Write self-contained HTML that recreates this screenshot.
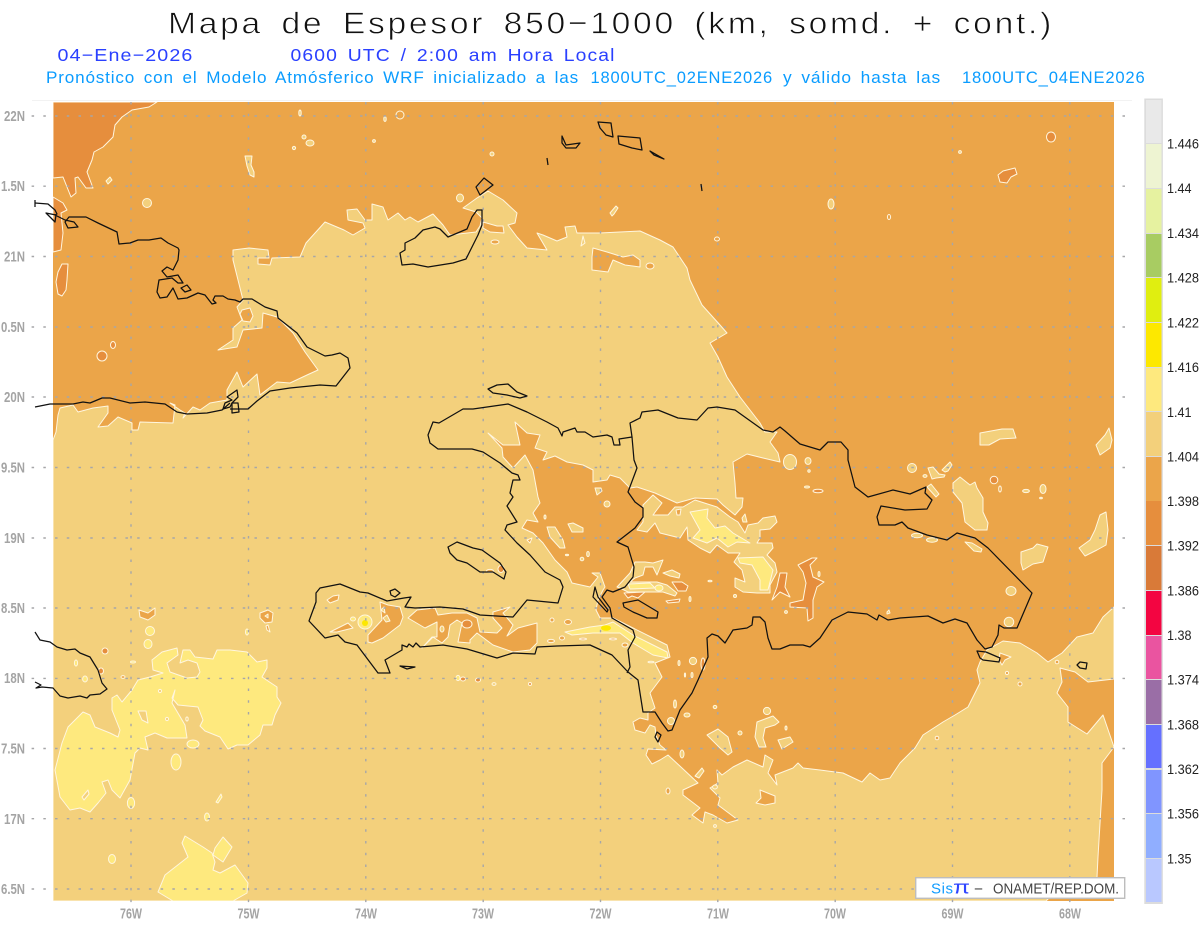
<!DOCTYPE html>
<html lang="es"><head><meta charset="utf-8"><title>Mapa de Espesor 850-1000</title>
<style>
html,body{margin:0;padding:0;background:#fff;width:1200px;height:927px;overflow:hidden}
svg{display:block;position:absolute;left:0;top:0}
text{font-family:"Liberation Sans",sans-serif;white-space:pre}
.c polygon,.c path,.c ellipse,.c circle{stroke:#fff6df;stroke-width:1;stroke-linejoin:round}
.l{fill:#f3d07b}.o{fill:#eba54a}.d{fill:#e68e3d}.y{fill:#fee97e}.b{fill:#fde800}
.g line{stroke:#a6a6a8;stroke-width:1.4;stroke-dasharray:2.5 9.23}
.k polygon,.k polyline{fill:none;stroke:#111;stroke-width:1.25;stroke-linejoin:round}
.ax{fill:#a4a4a4;font-weight:bold;font-size:14.5px}
.lg{fill:#222;font-size:13.5px}
.s2{font-size:17.5px;fill:#2a40ff;letter-spacing:1px;word-spacing:3px}
.s3{font-size:16.5px;fill:#0a9cff;letter-spacing:.8px;word-spacing:3px}
</style></head><body>
<svg width="1200" height="927" viewBox="0 0 1200 927" xmlns="http://www.w3.org/2000/svg">
<defs><filter id="sf" x="0" y="0" width="100%" height="100%"><feGaussianBlur stdDeviation=".35"/></filter></defs>
<rect width="1200" height="927" fill="#fff"/>
<text x="168" y="33.5" font-size="31" textLength="886" lengthAdjust="spacingAndGlyphs" fill="#111" stroke="#fff" stroke-width=".7" style="letter-spacing:2.5px;word-spacing:6px">Mapa de Espesor 850−1000 (km, somd. + cont.)</text>
<text class="s2" x="57.5" y="61" textLength="136" lengthAdjust="spacingAndGlyphs">04−Ene−2026</text>
<text class="s2" x="290.5" y="61" textLength="325" lengthAdjust="spacingAndGlyphs">0600 UTC / 2:00 am Hora Local</text>
<text class="s3" x="46" y="83" textLength="533" lengthAdjust="spacingAndGlyphs">Pronóstico con el Modelo Atmósferico WRF inicializado a las</text>
<text class="s3" x="590.5" y="83" textLength="182.5" lengthAdjust="spacingAndGlyphs">1800UTC_02ENE2026</text>
<text class="s3" x="783" y="83" textLength="158" lengthAdjust="spacingAndGlyphs">y válido hasta las</text>
<text class="s3" x="962" y="83" textLength="183.5" lengthAdjust="spacingAndGlyphs">1800UTC_04ENE2026</text>

<line x1="32" y1="100.5" x2="1132" y2="100.5" stroke="#f2f2f2"/>
<g class="c" filter="url(#sf)">
<rect x="53" y="102" width="1061" height="799" class="o"/>
<polygon class="d" points="53,102 157,102 149,107 132,110 122,117 115,125 113,137 103,147 94,152 92,160 87,172 93,188 86,188 78,177 75,178 76,193 71,197 63,177 53,178"/>
<polygon class="d" points="53,197 63,203 67,210 61,213 63,233 61,250 53,252"/>
<polygon class="d" points="62,264 68,264 67,280 66,290 62,296 58,294 56,282 58,272"/>
<ellipse class="d" cx="102" cy="356" rx="5" ry="5"/>
<ellipse class="d" cx="113" cy="345" rx="2.5" ry="3.5"/>
<polygon class="d" points="998,175 1003,171 1015,168 1017,174 1011,177 1007,183 1000,182"/>
<ellipse class="d" cx="1051" cy="137" rx="4.5" ry="5"/>
<polygon class="l" points="245,156 252,156 251,165 254,172 254,177 250,175 247,166"/>
<circle class="l" cx="147" cy="203" r="4.5"/><polygon class="l" points="106,181 110,177 112,180 108,184"/>
<ellipse class="l" cx="310" cy="143" rx="4" ry="3"/><circle class="l" cx="304" cy="137" r="2"/><circle class="l" cx="294" cy="148" r="1.6"/>
<circle class="l" cx="374" cy="141" r="1.4"/><ellipse class="l" cx="300" cy="113" rx="1.2" ry="3"/><ellipse class="o" cx="400" cy="115" rx="4" ry="4"/><ellipse class="l" cx="385" cy="119" rx="1.2" ry="2.4"/>
<circle class="l" cx="492" cy="154" r="2"/><polygon class="l" points="610,213 616,206 618,208 614,214 612,216"/>
<ellipse class="l" cx="831" cy="204" rx="3" ry="5"/><circle class="l" cx="960" cy="152" r="1.4"/><ellipse class="o" cx="889" cy="217" rx="1.6" ry="2.5"/><ellipse class="o" cx="717" cy="239" rx="2.5" ry="2"/>
<ellipse class="l" cx="460" cy="198" rx="3.5" ry="4"/>

<polygon class="l" points="53,440 56,432 58,415 60,408 73,405 78,412 93,408 108,406 108,413 98,427 108,426 118,417 132,423 132,430 138,430 140,422 173,423 175,405 170,403 180,410 185,413 183,418 193,407 200,410 210,403 227,400 227,390 237,372 243,387 257,374 260,395 277,382 290,383 307,375 318,370 305,352 293,333 277,317 263,313 262,328 243,330 237,347 218,350 233,340 233,328 242,320 237,307 243,300 238,280 233,260 233,250 249,248 268,250 269,258 258,258 258,264 270,265 272,258 300,257 306,243 325,222 344,230 353,235 365,228 363,223 348,220 347,210 357,209 365,220 372,220 372,204 383,207 388,220 398,213 405,220 410,217 418,222 433,214 443,225 450,235 476,232 480,226 482,218 476,212 463,208 477,198 488,191 503,200 517,213 515,223 508,225 517,237 527,248 547,250 537,233 543,235 557,241 567,237 565,227 575,226 577,233 600,233 620,232 640,231 660,240 673,247 687,268 690,280 702,305 720,325 727,333 710,343 718,357 727,377 740,397 760,423 765,432 777,432 770,442 778,453 780,462 763,458 747,454 733,462 735,483 736,498 743,498 742,507 735,515 723,505 717,499 695,498 677,503 655,493 637,487 630,488 620,478 610,475 607,480 593,482 593,470 583,465 567,462 555,456 543,460 547,452 535,448 540,435 527,433 515,422 520,445 503,445 488,433 502,448 503,457 513,468 525,455 533,470 538,497 540,503 533,513 538,522 527,520 522,528 533,533 543,543 555,560 567,572 572,583 590,587 598,577 592,573 600,573 605,587 603,590 598,600 596,610 600,618 613,618 633,628 667,645 670,657 655,663 662,677 650,693 655,708 648,713 648,720 640,718 633,722 635,730 645,733 650,725 655,727 656,735 660,745 666,750 648,749 646,755 652,764 660,760 668,755 682,768 698,783 683,790 683,795 700,808 692,815 703,823 705,812 713,815 727,823 738,820 718,805 720,798 710,788 718,783 717,770 722,775 733,767 747,760 763,767 765,755 773,760 768,773 777,785 775,775 793,768 798,763 803,768 820,770 843,773 862,782 870,773 880,780 890,778 900,763 915,748 923,735 943,722 955,715 968,707 980,683 977,670 980,662 987,650 1003,641 1020,643 1037,653 1048,662 1062,653 1077,637 1093,633 1103,617 1114,607 1114,679 1088,682 1075,672 1060,668 1062,682 1057,693 1068,707 1068,722 1087,734 1103,715 1114,747 1102,763 1102,790 1098,857 1097,877 1090,890 1050,897 1046,901 53,901"/>

<polygon class="o" points="593,248 607,252 623,257 633,255 640,260 640,267 625,265 613,260 608,272 592,270 592,257"/>
<polygon class="o" points="483,222 497,226 503,226 504,233 490,232 483,228"/>
<ellipse class="o" cx="495" cy="242" rx="4" ry="2"/><ellipse class="o" cx="650" cy="266" rx="4" ry="3"/>
<polygon class="l" points="583,236 585,243 581,246"/>
<polygon class="o" points="242,310 250,308 253,316 250,322 243,321 240,314"/>
<polygon class="o" points="327,600 333,596 339,595 338,600 330,603"/>
<polygon class="o" points="368,642 368,635 382,620 380,602 388,605 400,607 403,617 400,625 383,638 372,643"/>
<polygon class="l" points="381,610 384,607 385,613"/><polygon class="l" points="383,618 387,615 390,621 386,622"/>
<polygon class="o" points="408,618 417,610 435,608 438,615 452,613 467,613 477,618 480,632 497,633 502,628 493,618 493,612 510,607 503,613 513,625 507,636 518,628 537,623 537,643 530,650 513,652 493,645 477,633 470,640 470,643 458,642 462,623 457,620 450,625 448,637 442,643 433,637 422,648 432,637 437,637 437,622 425,628"/>
<ellipse class="d" cx="467" cy="624" rx="5" ry="4"/><ellipse class="l" cx="442" cy="629" rx="2" ry="3"/>
<polygon class="o" points="330,632 348,623 353,628 337,632"/>
<ellipse class="o" cx="552" cy="620" rx="2" ry="2"/><ellipse class="o" cx="568" cy="622" rx="3.5" ry="2.5"/><ellipse class="o" cx="562" cy="638" rx="2.5" ry="2"/><ellipse class="o" cx="551" cy="641" rx="3.5" ry="1.6"/><ellipse class="o" cx="625" cy="645" rx="3" ry="2"/>
<ellipse class="o" cx="490" cy="571" rx="3.5" ry="1.6"/><ellipse class="d" cx="501" cy="569" rx="3" ry="3.5"/>
<ellipse class="d" cx="463" cy="679" rx="2.5" ry="2"/><ellipse class="d" cx="478" cy="680" rx="2.5" ry="2"/><ellipse class="d" cx="530" cy="684" rx="1.5" ry="1.5"/><ellipse class="y" cx="458" cy="678" rx="2" ry="2.6"/><ellipse class="l" cx="494" cy="684" rx="2" ry="1.4"/>
<polygon class="o" points="760,790 775,796 775,803 765,805 756,803 761,798"/>
<polygon class="o" points="1000,653 1011,657 1005,660 1002,665 999,660"/>
<circle class="o" cx="1007" cy="673" r="1.6"/><circle class="o" cx="1020" cy="684" r="2"/><circle class="o" cx="937" cy="738" r="1.8"/><circle class="o" cx="1057" cy="662" r="1.8"/>
<polygon class="o" points="139,610 148,613 155,608 155,615 148,620 140,617"/>
<polygon class="o" points="260,613 268,610 273,613 272,622 265,623 260,618"/>
<polygon class="l" points="265,616 268,614 268,618"/>
<polygon class="o" points="266,626 268,625 270,632 267,630"/>
<circle class="d" cx="105" cy="651" r="3"/><ellipse class="d" cx="101" cy="671" rx="2.5" ry="3"/><ellipse class="o" cx="123" cy="677" rx="2" ry="1.4"/>

<polygon class="l" points="980,433 1002,429 1013,429 1016,438 1000,439 989,445 980,445"/>
<ellipse class="l" cx="790" cy="462" rx="6.5" ry="7.5"/><ellipse class="l" cx="808" cy="461" rx="3" ry="3.4"/><circle class="l" cx="809" cy="471" r="1.2"/><ellipse class="l" cx="807" cy="487" rx="2.5" ry="1"/><ellipse class="d" cx="818" cy="491" rx="5" ry="1.8"/>
<ellipse class="l" cx="912" cy="468" rx="4.5" ry="4.5"/>
<polygon class="l" points="928,468 933,467 939,474 945,475 944,477 936,478 932,479"/>
<polygon class="l" points="942,470 950,462 952,465 948,471 945,472"/>
<ellipse class="l" cx="925" cy="476" rx="2" ry="1.4"/>
<polygon class="l" points="927,487 931,484 939,494 936,497"/>
<polygon class="l" points="960,477 970,485 975,482 977,488 983,498 983,512 988,523 987,530 975,530 965,522 962,503 953,492 953,483"/>
<circle class="d" cx="994" cy="480" r="3.8"/><ellipse class="o" cx="1000" cy="489" rx="1.3" ry="3"/><ellipse class="l" cx="1026" cy="491" rx="3.4" ry="1.6"/><ellipse class="l" cx="1043" cy="489" rx="3" ry="4.5"/><ellipse class="l" cx="1041" cy="498" rx="1.4" ry=".8"/>
<polygon class="l" points="965,542 972,543 982,549 981,552 974,551"/>
<ellipse class="l" cx="917" cy="535.5" rx="5.5" ry="2.2"/><ellipse class="l" cx="932" cy="540" rx="5.5" ry="2.2"/>
<polygon class="l" points="1021,552 1033,548 1037,544 1048,547 1043,562 1033,564 1023,570 1021,563"/>
<ellipse class="l" cx="1011" cy="591" rx="5" ry="4.5"/><circle class="l" cx="1009" cy="622" r="4.8"/>
<polygon class="l" points="1079,548 1090,540 1095,530 1100,515 1106,512 1108,530 1106,545 1097,550 1085,556"/>
<polygon class="l" points="1096,445 1105,435 1109,428 1112,440 1110,448 1100,455"/>
<polygon class="l" points="887,612 889,610 890,613 887,614"/>
<polygon class="l" points="595,488 601,488 602,491 597,495"/><circle class="l" cx="607" cy="504" r="3"/><ellipse class="l" cx="545" cy="517" rx="1" ry="2"/>
<polygon class="l" points="547,527 555,527 563,540 565,548 560,548 550,537"/>
<polygon class="l" points="568,524 573,523 583,528 583,532 572,532"/>
<circle class="l" cx="582" cy="559" r="1.8"/><ellipse class="l" cx="588" cy="554" rx="1.3" ry="2.5"/><ellipse class="y" cx="567" cy="555" rx="1.6" ry=".7"/>
<polygon class="o" points="527,540 532,538 530,543"/>
<polygon class="l" points="637,530 643,522 643,505 653,495 662,503 653,515 668,515 675,507 683,507 695,500 717,507 730,517 738,522 745,533 748,525 758,523 763,518 775,516 777,522 770,529 760,530 760,538 757,543 772,543 773,548 767,555 775,563 777,572 770,585 770,593 757,593 743,592 735,587 735,578 745,582 742,570 734,562 740,553 728,553 717,545 710,553 700,548 688,540 687,527 680,538 668,535 660,533 655,523 647,532"/>
<polygon class="y" points="690,512 708,509 707,518 715,528 725,526 733,533 750,543 737,542 728,547 717,538 707,543 693,538 700,530"/>
<polygon class="y" points="738,558 763,557 773,570 768,590 760,590 760,580 752,565 740,563"/>
<polygon class="o" points="676,510 681,509 680,515 677,515"/>
<polygon class="l" points="742,518 745,514 747,522 743,522"/>
<polygon class="l" points="617,587 630,573 635,562 645,562 653,563 663,560 657,575 653,567 645,567 643,575 635,578 630,582 657,582 667,585 677,593 675,596 663,592 628,592 620,588"/>
<polygon class="y" points="628,584 650,583 655,588 630,589"/><ellipse class="y" cx="659" cy="588" rx="4" ry="3"/>
<polygon class="l" points="663,573 672,570 680,574 679,578 670,576"/>
<polygon class="d" points="672,582 682,582 688,586 686,591 678,591"/>
<polygon class="d" points="624,593 645,592 638,598 632,596 628,598"/>
<polygon class="d" points="666,601 680,599 679,602 668,603"/>
<ellipse class="l" cx="690" cy="599" rx="1" ry="2.5"/><ellipse class="l" cx="735" cy="596" rx="1.5" ry="1.5"/><ellipse class="l" cx="710" cy="581" rx="2" ry=".8"/><ellipse class="l" cx="786" cy="612" rx="1.4" ry="1.4"/><ellipse class="l" cx="819" cy="574" rx="1" ry="2.5"/>
<polygon class="d" points="798,565 812,558 817,558 810,565 813,577 824,582 817,587 813,600 813,618 808,621 807,608 790,607 790,603 803,600 806,583 803,572"/>
<polygon class="d" points="772,600 777,587 780,573 787,573 785,587 790,597 780,592"/>
<circle class="l" cx="693" cy="661" r="3.6"/><ellipse class="l" cx="679" cy="663" rx="1" ry="2.5"/><ellipse class="d" cx="703" cy="664" rx="2" ry="6"/><ellipse class="l" cx="692" cy="675" rx="1" ry="2.5"/><ellipse class="l" cx="685" cy="675" rx=".6" ry="2"/><ellipse class="l" cx="675" cy="704" rx="1.4" ry="4"/>
<polygon class="l" points="707,735 718,729 728,737 732,752 728,755 720,748 712,740"/>
<polygon class="l" points="757,722 773,716 779,722 775,725 765,728 763,738 766,747 759,747 755,737"/>
<circle class="l" cx="767" cy="711" r="3.6"/>
<polygon class="l" points="778,740 790,737 793,742 782,749"/>
<circle class="l" cx="740" cy="733" r="2"/><ellipse class="l" cx="687" cy="715" rx="3" ry="2"/><ellipse class="l" cx="715" cy="707" rx="1.8" ry="1.6"/><ellipse class="l" cx="786" cy="728" rx="1" ry="2"/><circle class="l" cx="671" cy="721" r="3.5"/><ellipse class="l" cx="682" cy="754" rx="2" ry="4"/>
<polygon class="l" points="695,776 702,768 704,771 699,778"/><ellipse class="l" cx="715" cy="787" rx="2.4" ry="2"/>
<ellipse class="o" cx="668" cy="791" rx="2" ry="3"/><ellipse class="l" cx="715" cy="826" rx="1.4" ry="1.4"/>

<polygon class="y" points="55,770 62,743 68,727 83,712 90,715 95,727 110,733 118,737 120,730 112,710 112,698 117,695 122,702 132,690 138,680 150,677 163,673 153,670 152,660 162,652 177,648 178,655 167,663 170,672 187,678 197,677 200,672 197,663 188,660 180,663 183,650 190,650 195,657 213,659 217,650 230,650 247,652 257,662 267,660 267,668 262,677 277,687 277,697 281,703 275,715 272,725 263,725 260,735 248,745 237,745 228,749 220,737 205,731 200,726 203,720 198,707 178,705 172,698 175,690 172,703 185,725 187,738 167,738 155,733 145,737 148,750 140,748 135,753 130,780 120,798 112,790 108,780 102,782 106,793 98,803 90,812 80,808 70,810 60,797"/>
<polygon class="l" points="138,711 146,711 148,723 142,720"/><polygon class="l" points="82,797 88,790 89,794 84,800"/>
<circle class="l" cx="160" cy="691" r="1.6"/><circle class="l" cx="167" cy="719" r="1.6"/><ellipse class="l" cx="187" cy="719" rx="1.2" ry="2"/>
<ellipse class="y" cx="150" cy="631" rx="4.5" ry="4.5"/><ellipse class="y" cx="148" cy="644" rx="4" ry="4.5"/><ellipse class="y" cx="133" cy="662" rx="2.5" ry="1"/><ellipse class="y" cx="193" cy="744" rx="6" ry="4"/><ellipse class="y" cx="176" cy="762" rx="5" ry="8"/><ellipse class="y" cx="131" cy="803" rx="3.6" ry="5.5"/><polygon class="y" points="216,802 221,794 222,797 218,803"/><ellipse class="y" cx="207" cy="817" rx="2.4" ry="4"/><ellipse class="y" cx="112" cy="859" rx="3.5" ry="4.5"/><ellipse class="y" cx="247" cy="632" rx="1.5" ry="3"/><ellipse class="y" cx="85" cy="679" rx="2.4" ry="3"/><ellipse class="y" cx="76" cy="663" rx="1.6" ry="3"/>
<polygon class="y" points="158,892 165,875 188,857 182,843 185,836 203,847 212,853 215,862 213,870 220,873 235,865 248,883 247,893 233,901 173,901"/>
<polygon class="y" points="215,848 223,837 232,847 223,862 213,855"/>
<ellipse class="y" cx="365" cy="622" rx="7" ry="7"/><circle class="b" cx="365" cy="623" r="3" style="stroke:none"/><ellipse class="y" cx="353" cy="619" rx="2.5" ry="2"/>
<polygon class="y" points="565,632 590,627 605,625 613,622 633,635 653,645 667,652 668,658 653,655 633,643 620,633 593,633 572,635"/>
<ellipse class="b" cx="606" cy="628" rx="5" ry="2.8" style="stroke:none"/>
<ellipse class="d" cx="583" cy="639" rx="3.5" ry=".9"/><ellipse class="d" cx="613" cy="639" rx="3.5" ry=".9"/><ellipse class="l" cx="651" cy="662" rx="3" ry=".8"/>
</g>

<rect x="53" y="901" width="1061" height="1" fill="#fff"/>

<g class="g">
<line x1="31.6" y1="116" x2="1133" y2="116"/><line x1="31.6" y1="186.2" x2="1133" y2="186.2"/><line x1="31.6" y1="256.5" x2="1133" y2="256.5"/><line x1="31.6" y1="327" x2="1133" y2="327"/><line x1="31.6" y1="397" x2="1133" y2="397"/><line x1="31.6" y1="467.5" x2="1133" y2="467.5"/><line x1="31.6" y1="538" x2="1133" y2="538"/><line x1="31.6" y1="608" x2="1133" y2="608"/><line x1="31.6" y1="678.4" x2="1133" y2="678.4"/><line x1="31.6" y1="748.5" x2="1133" y2="748.5"/><line x1="31.6" y1="818.7" x2="1133" y2="818.7"/><line x1="31.6" y1="889" x2="1133" y2="889"/>
<line x1="131" y1="102" x2="131" y2="907"/><line x1="248.5" y1="102" x2="248.5" y2="907"/><line x1="365.8" y1="102" x2="365.8" y2="907"/><line x1="483.2" y1="102" x2="483.2" y2="907"/><line x1="600.5" y1="102" x2="600.5" y2="907"/><line x1="717.8" y1="102" x2="717.8" y2="907"/><line x1="835.2" y1="102" x2="835.2" y2="907"/><line x1="952.5" y1="102" x2="952.5" y2="907"/><line x1="1069.8" y1="102" x2="1069.8" y2="907"/>
</g>

<g class="k">
<polyline points="35,407 50,404 73,404 83,402 90,403 102,398 110,398 130,403 145,402 165,404 177,412 187,414 207,413 222,410 230,403"/>
<polyline points="230,409 248,409 257,401 270,391 290,388 320,385 336,386 350,368 348,358 340,353 332,355 325,356 307,347 297,333 278,318 277,311 265,307 252,299 243,299 240,302 235,300 228,299 223,296 215,296 213,300 216,303 212,304 205,295 198,293 187,298 178,299 173,288 167,297 160,298 157,292 159,280 172,278 178,283 183,283 178,275 167,277 162,271 167,267 173,270 178,260 179,250 178,248 168,243 161,238 149,240 138,240 130,243 119,244 117,232 98,223 86,217 69,217 65,222 68,228 78,227 74,222 65,220 55,215 57,214 55,210 48,204 35,203"/>
<polyline points="35,200 35,207"/><polygon points="46,213 56,215 55,222"/>
<polygon points="181,288 187,285 191,290 185,292"/>
<polygon points="227,397 237,390 238,397 232,403 230,407 223,409 225,403 232,400"/>
<polygon points="232,403 238,403 239,412 232,413"/>
<polygon points="476,187 484,178 493,185 480,195"/>
<polygon points="402,265 400,253 405,250 405,243 415,238 423,230 435,227 440,229 448,237 467,229 472,217 477,210 482,210 482,225 478,235 466,259 453,263 428,267 413,264"/>
<polygon points="562,136 566,145 580,143 576,148 566,148 562,143"/>
<polyline points="547,158 548,165"/>
<polygon points="598,122 611,123 613,137 606,135 600,128"/>
<polygon points="618,136 640,138 642,150 632,148 619,144"/>
<polygon points="650,151 664,159 654,155"/>
<polyline points="701,184 702,191"/>
<polygon points="488,389 497,385 508,384 517,392 527,396 520,398 507,395 493,393"/>
<polygon points="433,422 439,423 463,409 473,409 508,404 527,412 547,422 558,428 562,436 563,432 575,428 577,432 585,432 593,437 607,435 612,437 614,445 620,445 619,439 632,437 630,423 640,418 642,412 658,410 678,418 697,420 708,408 717,407 735,410 763,430 773,432 780,427 785,431 800,444 820,450 828,442 841,442 848,450 848,460 855,487 868,497 893,490 910,494 926,487 925,493 932,500 927,509 905,510 881,506 877,517 879,525 895,525 902,522 908,528 927,535 947,540 957,533 975,538 988,548 1032,593 1017,628 1004,628 999,625 998,635 992,647 985,649 977,640 967,623 955,619 943,623 928,616 900,618 888,620 879,615 877,620 867,614 848,612 832,620 820,638 810,647 803,645 790,645 780,649 772,649 768,638 765,622 760,617 753,617 752,625 747,628 733,630 725,643 718,636 712,634 707,638 708,657 698,680 692,693 680,710 672,730 668,731 662,723 655,712 643,712 640,693 638,680 628,672 612,655 590,645 557,646 537,647 535,654 513,653 497,658 467,649 443,645 420,647 416,643 413,647 409,644 407,647 402,645 402,650 385,660 390,673 378,673 357,645 345,642 338,635 325,638 309,621 316,602 316,593 320,588 340,584 360,592 368,593 387,601 404,598 411,597 408,602 405,607 415,608 440,607 463,609 480,615 513,617 527,600 558,603 563,587 560,580 545,572 530,555 517,543 505,530 507,525 517,522 507,506 513,497 510,493 513,480 520,480 518,475 512,473 500,463 483,452 472,449 463,449 438,449 430,443 428,435"/>
<polyline points="632,437 634,460 637,468 628,492 635,502 643,508 643,517 635,528 617,542 628,547 634,567 633,577 625,587 613,592 607,590 602,597 610,608 612,618 633,630 635,637 628,650 630,667 627,673"/>
<polygon points="595,587 598,597 608,610 607,612 593,597"/>
<polygon points="623,603 638,600 658,612 657,618 647,618 633,612 624,607"/>
<polygon points="390,591 395,589 400,593 395,597 391,595"/>
<polygon points="400,666 415,667 407,669"/>
<polygon points="448,547 457,542 473,548 482,550 500,563 506,572 504,579 493,572 480,572 467,563 457,560 450,553"/>
<polygon points="977,651 986,652 1000,658 999,662 983,660 980,658"/>
<polygon points="1077,665 1080,662 1087,663 1086,669 1080,668"/>
<polygon points="655,737 657,732 661,735 658,742"/>
<polyline points="35,632 40,640 50,642 57,647 67,650 75,649 80,653 90,657 98,670 102,683 107,689 100,694 90,695 87,698 80,696 68,698 60,696 53,688 42,687 36,688 41,685 35,682"/>
</g>

<g class="ax" text-anchor="end">
<text x="25" y="121" textLength="21" lengthAdjust="spacingAndGlyphs">22N</text>
<text x="25" y="191" textLength="24" lengthAdjust="spacingAndGlyphs">1.5N</text>
<text x="25" y="261.5" textLength="21" lengthAdjust="spacingAndGlyphs">21N</text>
<text x="25" y="332" textLength="24" lengthAdjust="spacingAndGlyphs">0.5N</text>
<text x="25" y="402" textLength="21" lengthAdjust="spacingAndGlyphs">20N</text>
<text x="25" y="472.5" textLength="24" lengthAdjust="spacingAndGlyphs">9.5N</text>
<text x="25" y="543" textLength="21" lengthAdjust="spacingAndGlyphs">19N</text>
<text x="25" y="613" textLength="24" lengthAdjust="spacingAndGlyphs">8.5N</text>
<text x="25" y="683" textLength="21" lengthAdjust="spacingAndGlyphs">18N</text>
<text x="25" y="753.5" textLength="24" lengthAdjust="spacingAndGlyphs">7.5N</text>
<text x="25" y="824" textLength="21" lengthAdjust="spacingAndGlyphs">17N</text>
<text x="25" y="894" textLength="24" lengthAdjust="spacingAndGlyphs">6.5N</text>
</g>
<g class="ax" text-anchor="middle">
<text x="131" y="918.5" textLength="22" lengthAdjust="spacingAndGlyphs">76W</text>
<text x="248.5" y="918.5" textLength="22" lengthAdjust="spacingAndGlyphs">75W</text>
<text x="366" y="918.5" textLength="22" lengthAdjust="spacingAndGlyphs">74W</text>
<text x="483" y="918.5" textLength="22" lengthAdjust="spacingAndGlyphs">73W</text>
<text x="600.5" y="918.5" textLength="22" lengthAdjust="spacingAndGlyphs">72W</text>
<text x="718" y="918.5" textLength="22" lengthAdjust="spacingAndGlyphs">71W</text>
<text x="835" y="918.5" textLength="22" lengthAdjust="spacingAndGlyphs">70W</text>
<text x="952.5" y="918.5" textLength="22" lengthAdjust="spacingAndGlyphs">69W</text>
<text x="1070" y="918.5" textLength="22" lengthAdjust="spacingAndGlyphs">68W</text>
</g>

<rect x="1144.3" y="98.5" width="18.6" height="805.5" fill="#dcdcdc"/>
<g shape-rendering="crispEdges">
<rect x="1146" y="100" width="15.6" height="43" fill="#e9e9e9"/>
<rect x="1146" y="144" width="15.6" height="44" fill="#eef4d2"/>
<rect x="1146" y="189" width="15.6" height="44" fill="#e6f2a0"/>
<rect x="1146" y="234" width="15.6" height="43" fill="#a8cc62"/>
<rect x="1146" y="278" width="15.6" height="44" fill="#e0ee10"/>
<rect x="1146" y="323" width="15.6" height="44" fill="#fde800"/>
<rect x="1146" y="368" width="15.6" height="43" fill="#fee97e"/>
<rect x="1146" y="412" width="15.6" height="44" fill="#f3d07b"/>
<rect x="1146" y="457" width="15.6" height="44" fill="#eba54a"/>
<rect x="1146" y="501" width="15.6" height="44" fill="#e68e3d"/>
<rect x="1146" y="546" width="15.6" height="44" fill="#d97a38"/>
<rect x="1146" y="591" width="15.6" height="44" fill="#f30541"/>
<rect x="1146" y="636" width="15.6" height="43" fill="#ea54a0"/>
<rect x="1146" y="680" width="15.6" height="44" fill="#9a6ea6"/>
<rect x="1146" y="725" width="15.6" height="43" fill="#6570ff"/>
<rect x="1146" y="770" width="15.6" height="43" fill="#8095ff"/>
<rect x="1146" y="814" width="15.6" height="44" fill="#90aeff"/>
<rect x="1146" y="859" width="15.6" height="43" fill="#b9c8ff"/>
</g>
<g class="lg">
<text x="1167" y="148.5" textLength="32" lengthAdjust="spacingAndGlyphs">1.446</text><text x="1167" y="193" textLength="24.5" lengthAdjust="spacingAndGlyphs">1.44</text><text x="1167" y="238" textLength="32" lengthAdjust="spacingAndGlyphs">1.434</text><text x="1167" y="282.5" textLength="32" lengthAdjust="spacingAndGlyphs">1.428</text><text x="1167" y="327.5" textLength="32" lengthAdjust="spacingAndGlyphs">1.422</text><text x="1167" y="372" textLength="32" lengthAdjust="spacingAndGlyphs">1.416</text><text x="1167" y="417" textLength="24.5" lengthAdjust="spacingAndGlyphs">1.41</text><text x="1167" y="461.5" textLength="32" lengthAdjust="spacingAndGlyphs">1.404</text><text x="1167" y="506" textLength="32" lengthAdjust="spacingAndGlyphs">1.398</text><text x="1167" y="550.5" textLength="32" lengthAdjust="spacingAndGlyphs">1.392</text><text x="1167" y="595.5" textLength="32" lengthAdjust="spacingAndGlyphs">1.386</text><text x="1167" y="640" textLength="24.5" lengthAdjust="spacingAndGlyphs">1.38</text><text x="1167" y="684.5" textLength="32" lengthAdjust="spacingAndGlyphs">1.374</text><text x="1167" y="729.5" textLength="32" lengthAdjust="spacingAndGlyphs">1.368</text><text x="1167" y="774" textLength="32" lengthAdjust="spacingAndGlyphs">1.362</text><text x="1167" y="818.5" textLength="32" lengthAdjust="spacingAndGlyphs">1.356</text><text x="1167" y="863.5" textLength="24.5" lengthAdjust="spacingAndGlyphs">1.35</text>
</g>

<rect x="915.7" y="877.7" width="209" height="20.6" fill="#fff" stroke="#bdbdbd" stroke-width="1.4"/>
<text x="931" y="893.5" font-size="15" textLength="22" fill="#109cff">Sis</text>
<text x="953" y="893.5" font-size="18" textLength="17" lengthAdjust="spacingAndGlyphs" fill="#2f45ff">π</text>
<text x="974" y="893.5" font-size="14" textLength="9" lengthAdjust="spacingAndGlyphs" fill="#333">−</text>
<text x="993" y="893.5" font-size="14.5" textLength="126" lengthAdjust="spacingAndGlyphs" fill="#444">ONAMET/REP.DOM.</text>
</svg>
</body></html>
